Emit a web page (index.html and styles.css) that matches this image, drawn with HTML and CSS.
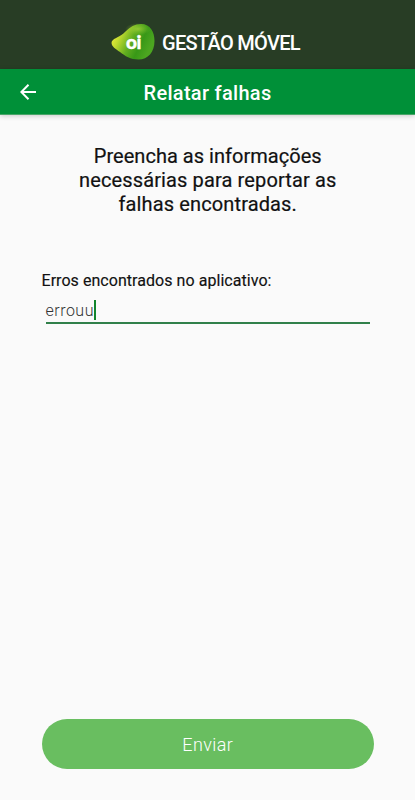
FILE: index.html
```
<!DOCTYPE html>
<html lang="pt-BR">
<head>
    <meta charset="UTF-8">
    <meta name="viewport" content="width=device-width, initial-scale=1.0">
    <title>Gestão Móvel - Relatar falhas</title>
    <link rel="stylesheet" href="styles.css">
</head>
<body>
    <div class="app">
        <header class="brand">
            <svg class="logo" viewBox="0 0 44 38" width="44" height="38">
                <defs>
                    <linearGradient id="blob" x1="0" y1="0.3" x2="0.9" y2="0.65">
                        <stop offset="0" stop-color="#eeee3c"/>
                        <stop offset="0.2" stop-color="#c3dc30"/>
                        <stop offset="0.5" stop-color="#62ae20"/>
                        <stop offset="0.75" stop-color="#389817"/>
                        <stop offset="1" stop-color="#4ca620"/>
                    </linearGradient>
                    <radialGradient id="shine" cx="0.5" cy="0.5" r="0.5">
                        <stop offset="0" stop-color="#b4dc40" stop-opacity="0.6"/>
                        <stop offset="1" stop-color="#8bc832" stop-opacity="0"/>
                    </radialGradient>
                </defs>
                <path d="M0.800 18.500C3 14.500 9 14.500 14.500 8.500C19 4 24 1 30 1C39.500 1 43.500 9 43.500 18C43.500 29 37 36.500 27.500 36.500C19.500 36.500 14 33 9 29C4 25.500 -0.500 22.500 0.800 18.500Z" fill="url(#blob)"/>
                <ellipse cx="27" cy="6" rx="13" ry="6" fill="url(#shine)"/>
                <text class="logo-text" x="15" y="26">oi</text>
            </svg>
            <h1>GESTÃO MÓVEL</h1>
        </header>

        <nav class="toolbar">
            <a class="back" href="#" aria-label="Voltar">
                <svg viewBox="0 0 16 16" width="16" height="16">
                    <path d="M8.500 0.800L1.300 8L8.500 15.200M1.300 8H16" fill="none" stroke="#fff" stroke-width="2"/>
                </svg>
            </a>
            <h2>Relatar falhas</h2>
        </nav>

        <main class="content">
            <p class="intro">
                <span class="line-1">Preencha as informações</span><br>
                <span class="line-2">necessárias para reportar as</span><br>
                <span class="line-3">falhas encontradas.</span>
            </p>

            <div class="form-group">
                <div class="label">Erros encontrados no aplicativo:</div>
                <div class="input"><span>errouu</span><i class="caret"></i></div>
            </div>

            <button class="btn-send" type="button">Enviar</button>
        </main>
    </div>
</body>
</html>
```
FILE: styles.css
```
* {
    margin: 0;
    padding: 0;
    box-sizing: border-box;
}

body {
    font-family: Roboto, 'Liberation Sans', sans-serif;
    background: #fafafa;
    color: #111;
}

.app {
    display: flex;
    flex-direction: column;
    height: 100vh;
    min-height: 800px;
}

.brand {
    display: flex;
    height: 69px;
    padding: 23px 0 0 111px;
    background: #283d25;
}

.logo {
    flex: none;
}

.logo-text {
    font-family: Lato, sans-serif;
    font-size: 19px;
    font-weight: 900;
    letter-spacing: -0.5px;
    fill: #fff;
    stroke: #fff;
    stroke-width: 0.4px;
}

.brand h1 {
    margin-left: 7px;
    font-size: 20px;
    font-weight: 500;
    line-height: 40px;
    letter-spacing: -0.7px;
    color: #fff;
    white-space: nowrap;
}

.toolbar {
    display: grid;
    grid-template-columns: 56px 1fr 56px;
    align-items: center;
    height: 46px;
    background: #009038;
    border-bottom: 1px solid #48a568;
    box-shadow: 0 1px 5px rgba(0, 0, 0, 0.2);
}

.back {
    display: flex;
    padding: 1px 0 0 20px;
}

.toolbar h2 {
    padding-top: 2px;
    font-size: 20px;
    font-weight: 500;
    line-height: 24px;
    letter-spacing: 0.3px;
    text-align: center;
    color: #fff;
}

.content {
    display: flex;
    flex: 1;
    flex-direction: column;
    padding: 29px 41px 31px 41.5px;
}

.intro {
    font-size: 20px;
    line-height: 24px;
    letter-spacing: 0.13px;
    text-align: center;
    white-space: nowrap;
    -webkit-text-stroke: 0.2px #111;
}

.line-1 {
    letter-spacing: 0.03px;
}

.form-group {
    margin-top: 55px;
}

.label {
    font-size: 16px;
    line-height: 20px;
    letter-spacing: 0.05px;
    -webkit-text-stroke: 0.15px #111;
}

.input {
    display: flex;
    align-items: center;
    height: 33px;
    margin: 0 4px;
    padding-top: 7px;
    border-bottom: 2px solid #31804a;
    font-size: 16px;
    font-weight: 300;
    letter-spacing: 0.5px;
    color: #333;
}

.caret {
    width: 2px;
    height: 20px;
    background: #12852c;
}

.btn-send {
    height: 50px;
    margin-top: auto;
    border: none;
    border-radius: 25px;
    background: #69be60;
    font-family: inherit;
    font-size: 18px;
    font-weight: 300;
    letter-spacing: 0.4px;
    color: #fff;
}
```
